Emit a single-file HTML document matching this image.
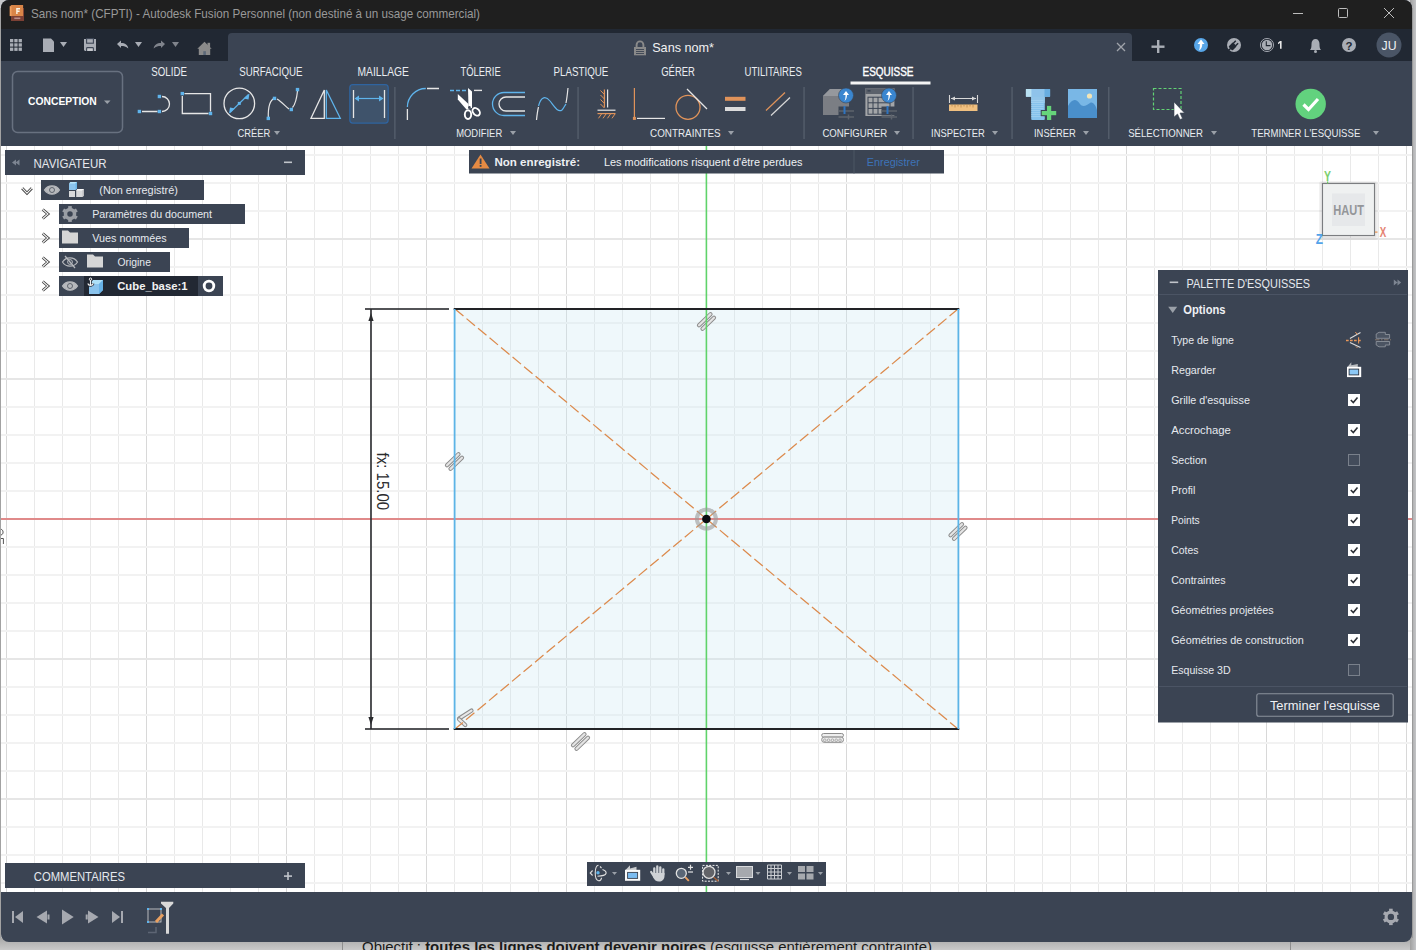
<!DOCTYPE html><html><head><meta charset="utf-8"><style>html,body{margin:0;padding:0;width:1416px;height:950px;overflow:hidden;background:#d2d3d5}svg{display:block;font-family:"Liberation Sans",sans-serif}</style></head><body><svg width="1416" height="950" viewBox="0 0 1416 950"><defs><linearGradient id="sh" x1="0" y1="0" x2="0" y2="1"><stop offset="0" stop-color="#a9a9a9"/><stop offset="1" stop-color="#c9c9c9"/></linearGradient><linearGradient id="shr" x1="0" y1="0" x2="1" y2="0"><stop offset="0" stop-color="#a0a0a0"/><stop offset="1" stop-color="#c4c5c7"/></linearGradient></defs><rect x="0" y="0" width="1416" height="950" fill="#c6c7c9"/><rect x="0" y="938" width="1416" height="12" fill="url(#sh)"/><rect x="1410" y="0" width="6" height="950" fill="url(#shr)"/><rect x="342" y="938" width="1" height="12" fill="#8e8e8e"/><rect x="1290" y="938" width="1" height="12" fill="#8e8e8e"/><text x="362" y="952" font-size="15" fill="#1a1a1a" textLength="570" lengthAdjust="spacingAndGlyphs">Objectif : <tspan font-weight="bold">toutes les lignes doivent devenir noires</tspan> (esquisse entièrement contrainte)</text><rect x="1412" y="8" width="1" height="930" fill="#9a9a9a"/><rect x="0" y="8" width="1" height="930" fill="#a2a2a2"/><rect x="1" y="0" width="1411" height="942" rx="8" fill="#3b4453"/><path d="M1 8 A8 8 0 0 1 9 0 H1404 A8 8 0 0 1 1412 8 V29 H1 Z" fill="#1f1f1f"/><rect x="1" y="29" width="1411" height="32" fill="#212833"/><path d="M228 61 V37 A4 4 0 0 1 232 33 H1128 A4 4 0 0 1 1132 37 V61 Z" fill="#3b4453"/><svg x="1" y="146" width="1411" height="746" viewBox="1 146 1411 746" overflow="hidden"><rect x="1" y="146" width="1411" height="746" fill="#ffffff"/><rect x="6" y="146" width="1" height="746" fill="#d8d8d8"/><rect x="34" y="146" width="1" height="746" fill="#e9e9e9"/><rect x="62" y="146" width="1" height="746" fill="#e9e9e9"/><rect x="90" y="146" width="1" height="746" fill="#e9e9e9"/><rect x="118" y="146" width="1" height="746" fill="#e9e9e9"/><rect x="146" y="146" width="1" height="746" fill="#d8d8d8"/><rect x="174" y="146" width="1" height="746" fill="#e9e9e9"/><rect x="202" y="146" width="1" height="746" fill="#e9e9e9"/><rect x="230" y="146" width="1" height="746" fill="#e9e9e9"/><rect x="258" y="146" width="1" height="746" fill="#e9e9e9"/><rect x="286" y="146" width="1" height="746" fill="#d8d8d8"/><rect x="314" y="146" width="1" height="746" fill="#e9e9e9"/><rect x="342" y="146" width="1" height="746" fill="#e9e9e9"/><rect x="370" y="146" width="1" height="746" fill="#e9e9e9"/><rect x="398" y="146" width="1" height="746" fill="#e9e9e9"/><rect x="426" y="146" width="1" height="746" fill="#d8d8d8"/><rect x="454" y="146" width="1" height="746" fill="#e9e9e9"/><rect x="482" y="146" width="1" height="746" fill="#e9e9e9"/><rect x="510" y="146" width="1" height="746" fill="#e9e9e9"/><rect x="538" y="146" width="1" height="746" fill="#e9e9e9"/><rect x="566" y="146" width="1" height="746" fill="#d8d8d8"/><rect x="594" y="146" width="1" height="746" fill="#e9e9e9"/><rect x="622" y="146" width="1" height="746" fill="#e9e9e9"/><rect x="650" y="146" width="1" height="746" fill="#e9e9e9"/><rect x="678" y="146" width="1" height="746" fill="#e9e9e9"/><rect x="706" y="146" width="1" height="746" fill="#d8d8d8"/><rect x="734" y="146" width="1" height="746" fill="#e9e9e9"/><rect x="762" y="146" width="1" height="746" fill="#e9e9e9"/><rect x="790" y="146" width="1" height="746" fill="#e9e9e9"/><rect x="818" y="146" width="1" height="746" fill="#e9e9e9"/><rect x="846" y="146" width="1" height="746" fill="#d8d8d8"/><rect x="874" y="146" width="1" height="746" fill="#e9e9e9"/><rect x="902" y="146" width="1" height="746" fill="#e9e9e9"/><rect x="930" y="146" width="1" height="746" fill="#e9e9e9"/><rect x="958" y="146" width="1" height="746" fill="#e9e9e9"/><rect x="986" y="146" width="1" height="746" fill="#d8d8d8"/><rect x="1014" y="146" width="1" height="746" fill="#e9e9e9"/><rect x="1042" y="146" width="1" height="746" fill="#e9e9e9"/><rect x="1070" y="146" width="1" height="746" fill="#e9e9e9"/><rect x="1098" y="146" width="1" height="746" fill="#e9e9e9"/><rect x="1126" y="146" width="1" height="746" fill="#d8d8d8"/><rect x="1154" y="146" width="1" height="746" fill="#e9e9e9"/><rect x="1182" y="146" width="1" height="746" fill="#e9e9e9"/><rect x="1210" y="146" width="1" height="746" fill="#e9e9e9"/><rect x="1238" y="146" width="1" height="746" fill="#e9e9e9"/><rect x="1266" y="146" width="1" height="746" fill="#d8d8d8"/><rect x="1294" y="146" width="1" height="746" fill="#e9e9e9"/><rect x="1322" y="146" width="1" height="746" fill="#e9e9e9"/><rect x="1350" y="146" width="1" height="746" fill="#e9e9e9"/><rect x="1378" y="146" width="1" height="746" fill="#e9e9e9"/><rect x="1406" y="146" width="1" height="746" fill="#d8d8d8"/><rect x="1" y="154" width="1411" height="2" fill="#f2f2f2"/><rect x="1" y="182" width="1411" height="2" fill="#f2f2f2"/><rect x="1" y="210" width="1411" height="2" fill="#f2f2f2"/><rect x="1" y="238" width="1411" height="2" fill="#e6e6e6"/><rect x="1" y="266" width="1411" height="2" fill="#f2f2f2"/><rect x="1" y="294" width="1411" height="2" fill="#f2f2f2"/><rect x="1" y="322" width="1411" height="2" fill="#f2f2f2"/><rect x="1" y="350" width="1411" height="2" fill="#f2f2f2"/><rect x="1" y="378" width="1411" height="2" fill="#e6e6e6"/><rect x="1" y="406" width="1411" height="2" fill="#f2f2f2"/><rect x="1" y="434" width="1411" height="2" fill="#f2f2f2"/><rect x="1" y="462" width="1411" height="2" fill="#f2f2f2"/><rect x="1" y="490" width="1411" height="2" fill="#f2f2f2"/><rect x="1" y="518" width="1411" height="2" fill="#e6e6e6"/><rect x="1" y="546" width="1411" height="2" fill="#f2f2f2"/><rect x="1" y="574" width="1411" height="2" fill="#f2f2f2"/><rect x="1" y="602" width="1411" height="2" fill="#f2f2f2"/><rect x="1" y="630" width="1411" height="2" fill="#f2f2f2"/><rect x="1" y="658" width="1411" height="2" fill="#e6e6e6"/><rect x="1" y="686" width="1411" height="2" fill="#f2f2f2"/><rect x="1" y="714" width="1411" height="2" fill="#f2f2f2"/><rect x="1" y="742" width="1411" height="2" fill="#f2f2f2"/><rect x="1" y="770" width="1411" height="2" fill="#f2f2f2"/><rect x="1" y="798" width="1411" height="2" fill="#e6e6e6"/><rect x="1" y="826" width="1411" height="2" fill="#f2f2f2"/><rect x="1" y="854" width="1411" height="2" fill="#f2f2f2"/><rect x="1" y="882" width="1411" height="2" fill="#f2f2f2"/><rect x="454.5" y="309" width="503.5" height="420" fill="#cbe9f3" opacity="0.3"/><g transform="translate(706.5,321.5)" fill="#e4e4e4" stroke="#8c8c8c" stroke-width="1"><rect x="-9.6" y="-4.1" width="19.2" height="3.2" rx="1.6" transform="rotate(-44)"/><rect x="-9.6" y="0.9" width="19.2" height="3.2" rx="1.6" transform="rotate(-44)"/></g><g transform="translate(454.5,461.5)" fill="#e4e4e4" stroke="#8c8c8c" stroke-width="1"><rect x="-9.6" y="-4.1" width="19.2" height="3.2" rx="1.6" transform="rotate(-44)"/><rect x="-9.6" y="0.9" width="19.2" height="3.2" rx="1.6" transform="rotate(-44)"/></g><g transform="translate(958.0,531.5)" fill="#e4e4e4" stroke="#8c8c8c" stroke-width="1"><rect x="-9.6" y="-4.1" width="19.2" height="3.2" rx="1.6" transform="rotate(-44)"/><rect x="-9.6" y="0.9" width="19.2" height="3.2" rx="1.6" transform="rotate(-44)"/></g><g transform="translate(580.5,741.5)" fill="#e4e4e4" stroke="#8c8c8c" stroke-width="1"><rect x="-9.6" y="-4.1" width="19.2" height="3.2" rx="1.6" transform="rotate(-44)"/><rect x="-9.6" y="0.9" width="19.2" height="3.2" rx="1.6" transform="rotate(-44)"/></g><g fill="#eeeeee" stroke="#8c8c8c" stroke-width="1"><rect x="821.7" y="733.5" width="21.8" height="3.6" rx="1.8"/><rect x="821.7" y="737.1" width="21.8" height="5.2" rx="2.4"/></g><g fill="none" stroke="#9a9a9a" stroke-width="0.8"><circle cx="824.8" cy="740.2" r="1.3"/><circle cx="828.6" cy="740.2" r="1.3"/><circle cx="832.4" cy="740.2" r="1.3"/><circle cx="836.2" cy="740.2" r="1.3"/><circle cx="840.0" cy="740.2" r="1.3"/></g><g fill="#e8e8e8" stroke="#8c8c8c" stroke-width="1"><rect x="-9" y="-1.6" width="18" height="3.2" rx="1.6" transform="translate(465.3,714.6) rotate(-33)"/><rect x="-5.8" y="-1.6" width="11.6" height="3.2" rx="1.6" transform="translate(462.2,722.2) rotate(43)"/></g><rect x="1" y="518" width="1411" height="2" fill="#e08a8a"/><rect x="705.6" y="146" width="1.6" height="746" fill="#5fd36a"/><g stroke="#dc8a4c" stroke-width="1.25" stroke-dasharray="11 4" fill="none"><line x1="455" y1="309" x2="958" y2="729"/><line x1="958" y1="309" x2="455" y2="729"/></g><rect x="453.7" y="308" width="505.6" height="2" fill="#222326"/><rect x="453.7" y="728" width="505.6" height="2" fill="#222326"/><rect x="453.7" y="309" width="1.8" height="420" fill="#5cb4e6"/><rect x="957.5" y="309" width="1.8" height="420" fill="#5cb4e6"/><circle cx="706.4" cy="519" r="9.5" fill="none" stroke="#9a9a9a" stroke-width="4" opacity="0.6"/><circle cx="706.4" cy="519" r="4.3" fill="#0b0d12"/><g fill="#2a2b2e"><rect x="365" y="308.2" width="84" height="1.6"/><rect x="365" y="728.2" width="84" height="1.6"/><rect x="370.2" y="309" width="1.6" height="420"/><path d="M371 313 L373.6 321 L368.4 321 Z"/><path d="M371 725 L373.6 717 L368.4 717 Z"/></g><text transform="translate(376.8,452.6) rotate(90)" font-size="15.8" fill="#2a2b2e" textLength="57.5" lengthAdjust="spacingAndGlyphs" y="0" x="0" dy="0">fx: 15.00</text><path d="M1 529.3 C3.5 529.5 4 534.5 1 535 M1 538.5 H3.4 V544" fill="none" stroke="#555" stroke-width="1"/></svg><rect x="11" y="8" width="13" height="13" fill="#7c4034"/><path d="M9.8 6.5 L11.3 5 H23.1 V16.1 H9.8 Z" fill="#d98548"/><rect x="9.8" y="6.5" width="1.7" height="9.6" fill="#eea060"/><path d="M16.2 8 H20 V9.4 H17.6 V10.6 H19.6 V11.9 H17.6 V14 H16.2 Z" fill="#fbf4e6"/><rect x="14.3" y="17.5" width="6" height="1.6" fill="#c9a0a0" opacity="0.8"/><text x="31.0" y="17.8" font-size="12.4" fill="#999999" font-weight="normal" textLength="449.0" lengthAdjust="spacingAndGlyphs" >Sans nom* (CFPTI) - Autodesk Fusion Personnel (non destiné à un usage commercial)</text><rect x="1293" y="13" width="10" height="1" fill="#bdbdbd"/><rect x="1338.5" y="8.5" width="9" height="9" rx="1" fill="none" stroke="#bdbdbd" stroke-width="1"/><path d="M1384 8 L1394 18 M1394 8 L1384 18" stroke="#bdbdbd" stroke-width="1"/><rect x="10.0" y="39.0" width="3.3" height="3.3" fill="#a9adb5"/><rect x="10.0" y="43.3" width="3.3" height="3.3" fill="#a9adb5"/><rect x="10.0" y="47.6" width="3.3" height="3.3" fill="#a9adb5"/><rect x="14.3" y="39.0" width="3.3" height="3.3" fill="#a9adb5"/><rect x="14.3" y="43.3" width="3.3" height="3.3" fill="#a9adb5"/><rect x="14.3" y="47.6" width="3.3" height="3.3" fill="#a9adb5"/><rect x="18.6" y="39.0" width="3.3" height="3.3" fill="#a9adb5"/><rect x="18.6" y="43.3" width="3.3" height="3.3" fill="#a9adb5"/><rect x="18.6" y="47.6" width="3.3" height="3.3" fill="#a9adb5"/><path d="M43 38.5 H51 L54 41.5 V52 H43 Z" fill="#a9adb5"/><path d="M60 42 H67 L63.5 47 Z" fill="#a9adb5"/><path d="M84 39 H96 V51 H85 L84 50 Z" fill="#a9adb5"/><rect x="86.6" y="38.6" width="6.8" height="4.6" fill="#a9adb5" stroke="#3d4655" stroke-width="1.1"/><path d="M86.6 51 V48.5 Q86.6 47.6 87.5 47.6 H92.5 Q93.4 47.6 93.4 48.5 V51" fill="#c4c7cc" stroke="#3d4655" stroke-width="1.1"/><path d="M117 44 L121 40.5 V43 C125 43 128 45 128.3 48.5 C126 46.5 124 46 121 46 V48 Z" fill="#a9adb5"/><path d="M135 42 H142 L138.5 47 Z" fill="#a9adb5"/><path d="M165 44 L161 40.5 V43 C157 43 154 45 153.7 48.5 C156 46.5 158 46 161 46 V48 Z" fill="#80848c"/><path d="M172 42 H179 L175.5 47 Z" fill="#80848c"/><rect x="207.5" y="42.8" width="2.6" height="4.5" fill="#8a8a8a"/><path d="M197.3 48.8 L204.5 41.8 L211.7 48.8 H210.2 V55 H198.8 V48.8 Z" fill="#8a8a8a"/><rect x="203.3" y="51.2" width="2.6" height="3.8" fill="#5b6878"/><path d="M636.6 47.5 V44.8 A3.4 3.4 0 0 1 643.4 44.8 V47.5" fill="none" stroke="#8a8a8a" stroke-width="1.9"/><rect x="634" y="47" width="12" height="8.3" fill="#8a8a8a"/><rect x="636" y="49" width="8" height="0.9" fill="#3b4453"/><rect x="636" y="51" width="8" height="0.9" fill="#3b4453"/><rect x="636" y="53" width="8" height="0.9" fill="#3b4453"/><text x="652.2" y="52.2" font-size="13.2" fill="#f2f2f2" font-weight="normal" textLength="61.8" lengthAdjust="spacingAndGlyphs" >Sans nom*</text><path d="M1117 43 L1125 51 M1125 43 L1117 51" stroke="#a0a4ab" stroke-width="1.3"/><rect x="1151.5" y="45.5" width="13" height="2.4" fill="#a9adb5"/><rect x="1157" y="40" width="2.4" height="13" fill="#a9adb5"/><circle cx="1201" cy="45" r="7" fill="#58a6e8"/><path d="M1201 39.5 L1204.5 44 H1202.3 C1202.3 47 1201 49.5 1199 50.5 C1199.8 48.5 1200 46 1199.8 44 H1197.5 Z" fill="#fff"/><circle cx="1234" cy="45" r="7" fill="#a9adb5"/><g transform="rotate(-45 1233 46)" fill="#212833"><rect x="1229.3" y="43.2" width="6.2" height="5.6" rx="1"/><rect x="1235" y="43.6" width="3.6" height="1.4"/><rect x="1235" y="47" width="3.6" height="1.4"/><rect x="1225.8" y="45.3" width="4" height="1.4"/></g><circle cx="1267" cy="45" r="6.6" fill="none" stroke="#a9adb5" stroke-width="0.9"/><circle cx="1267" cy="45" r="5.2" fill="#a9adb5"/><path d="M1266.3 41.2 V45.6 H1270.5" fill="none" stroke="#212833" stroke-width="1.1"/><path d="M1280 41 H1281.6 V48.8 H1280 V43 L1278 44.3 V42.7 Z" fill="#e8e8e8"/><path d="M1310 50 C1311.5 48.5 1311.5 46 1311.5 44 C1311.5 41 1313 39 1315.5 39 C1318 39 1319.5 41 1319.5 44 C1319.5 46 1319.5 48.5 1321 50 Z" fill="#a9adb5"/><circle cx="1315.5" cy="51.5" r="1.5" fill="#a9adb5"/><circle cx="1349" cy="45" r="7" fill="#a9adb5"/><text x="1345.5" y="49.5" font-size="11.0" fill="#212833" font-weight="bold" textLength="7.0" lengthAdjust="spacingAndGlyphs" >?</text><circle cx="1389" cy="45" r="12.5" fill="#4a5566"/><text x="1381.5" y="50.0" font-size="13.0" fill="#eef0f3" font-weight="normal" textLength="15.0" lengthAdjust="spacingAndGlyphs" >JU</text><text x="151.3" y="76.2" font-size="12.0" fill="#e9ecf0" font-weight="normal" textLength="35.6" lengthAdjust="spacingAndGlyphs" >SOLIDE</text><text x="239.3" y="76.2" font-size="12.0" fill="#e9ecf0" font-weight="normal" textLength="63.2" lengthAdjust="spacingAndGlyphs" >SURFACIQUE</text><text x="357.5" y="76.2" font-size="12.0" fill="#e9ecf0" font-weight="normal" textLength="51.4" lengthAdjust="spacingAndGlyphs" >MAILLAGE</text><text x="460.5" y="76.2" font-size="12.0" fill="#e9ecf0" font-weight="normal" textLength="40.2" lengthAdjust="spacingAndGlyphs" >TÔLERIE</text><text x="553.5" y="76.2" font-size="12.0" fill="#e9ecf0" font-weight="normal" textLength="54.9" lengthAdjust="spacingAndGlyphs" >PLASTIQUE</text><text x="661.2" y="76.2" font-size="12.0" fill="#e9ecf0" font-weight="normal" textLength="33.7" lengthAdjust="spacingAndGlyphs" >GÉRER</text><text x="744.5" y="76.2" font-size="12.0" fill="#e9ecf0" font-weight="normal" textLength="57.3" lengthAdjust="spacingAndGlyphs" >UTILITAIRES</text><text x="862.5" y="76.2" font-size="12.0" fill="#ffffff" font-weight="normal" textLength="51.0" lengthAdjust="spacingAndGlyphs" stroke="#ffffff" stroke-width="0.4">ESQUISSE</text><rect x="850.5" y="81.5" width="80" height="3" fill="#f4f4f4"/><rect x="12.5" y="71.5" width="110" height="61" rx="5" fill="none" stroke="#687180" stroke-width="1.5"/><text x="28.0" y="105.0" font-size="11.6" fill="#ffffff" font-weight="bold" textLength="68.8" lengthAdjust="spacingAndGlyphs" >CONCEPTION</text><path d="M104 100.5 H110.5 L107.25 104 Z" fill="#9aa0a8"/><rect x="394.1" y="87" width="1.5" height="52" fill="#535c6a"/><rect x="577.3" y="87" width="1.5" height="52" fill="#535c6a"/><rect x="803.3" y="87" width="1.5" height="52" fill="#535c6a"/><rect x="912.3" y="87" width="1.5" height="52" fill="#535c6a"/><rect x="1011.3" y="87" width="1.5" height="52" fill="#535c6a"/><rect x="1108.0" y="87" width="1.5" height="52" fill="#535c6a"/><text x="237.4" y="137.4" font-size="11.6" fill="#e9ecf0" font-weight="normal" textLength="32.8" lengthAdjust="spacingAndGlyphs" >CRÉER</text><path d="M274.0 131 H280.0 L277.0 135 Z" fill="#9aa0a8"/><text x="456.2" y="137.4" font-size="11.6" fill="#e9ecf0" font-weight="normal" textLength="46.0" lengthAdjust="spacingAndGlyphs" >MODIFIER</text><path d="M510.0 131 H516.0 L513.0 135 Z" fill="#9aa0a8"/><text x="650.1" y="137.4" font-size="11.6" fill="#e9ecf0" font-weight="normal" textLength="70.6" lengthAdjust="spacingAndGlyphs" >CONTRAINTES</text><path d="M728.0 131 H734.0 L731.0 135 Z" fill="#9aa0a8"/><text x="822.4" y="137.4" font-size="11.6" fill="#e9ecf0" font-weight="normal" textLength="64.7" lengthAdjust="spacingAndGlyphs" >CONFIGURER</text><path d="M894.0 131 H900.0 L897.0 135 Z" fill="#9aa0a8"/><text x="931.1" y="137.4" font-size="11.6" fill="#e9ecf0" font-weight="normal" textLength="53.7" lengthAdjust="spacingAndGlyphs" >INSPECTER</text><path d="M992.0 131 H998.0 L995.0 135 Z" fill="#9aa0a8"/><text x="1034.0" y="137.4" font-size="11.6" fill="#e9ecf0" font-weight="normal" textLength="41.8" lengthAdjust="spacingAndGlyphs" >INSÉRER</text><path d="M1083.0 131 H1089.0 L1086.0 135 Z" fill="#9aa0a8"/><text x="1128.2" y="137.4" font-size="11.6" fill="#e9ecf0" font-weight="normal" textLength="74.8" lengthAdjust="spacingAndGlyphs" >SÉLECTIONNER</text><path d="M1211.0 131 H1217.0 L1214.0 135 Z" fill="#9aa0a8"/><text x="1251.3" y="137.4" font-size="11.6" fill="#e9ecf0" font-weight="normal" textLength="109.0" lengthAdjust="spacingAndGlyphs" >TERMINER L&#x27;ESQUISSE</text><path d="M1373.0 131 H1379.0 L1376.0 135 Z" fill="#9aa0a8"/><path d="M142 111.5 H157.5 M162 96.5 A7.5 7.5 0 0 1 162 111.5" fill="none" stroke="#e6e6e6" stroke-width="1.3"/><rect x="137.7" y="109.8" width="3.4" height="3.4" fill="#5fb4ec"/><rect x="157.7" y="109.8" width="3.4" height="3.4" fill="#5fb4ec"/><rect x="157.7" y="94.8" width="3.4" height="3.4" fill="#5fb4ec"/><path d="M184.5 93.6 H210.5 V111.5 M182.3 96 V113.5 H208.5" fill="none" stroke="#e6e6e6" stroke-width="1.3"/><rect x="180.6" y="91.9" width="3.4" height="3.4" fill="#5fb4ec"/><rect x="208.8" y="111.8" width="3.4" height="3.4" fill="#5fb4ec"/><circle cx="239.3" cy="103.4" r="15.3" fill="none" stroke="#e6e6e6" stroke-width="1.3"/><path d="M230 112.5 L248.5 94.5" stroke="#5fb4ec" stroke-width="1.1"/><path d="M249.5 93.5 L248.5 99.5 L243.5 98.5 Z M229 113.5 L230 107.5 L235 108.5 Z" fill="#5fb4ec"/><rect x="237.8" y="101.9" width="3.0" height="3.0" fill="#5fb4ec"/><path d="M268.3 118 C268 108 270 100 274.5 98.4 M277 99 C282 102 286 107 289 109 M292.5 107.5 C295.5 104 297 96 297.5 91" fill="none" stroke="#e6e6e6" stroke-width="1.2"/><rect x="266.6" y="116.7" width="3.4" height="3.4" fill="#5fb4ec"/><rect x="272.8" y="96.7" width="3.4" height="3.4" fill="#5fb4ec"/><rect x="289.6" y="107.8" width="3.4" height="3.4" fill="#5fb4ec"/><rect x="295.8" y="87.9" width="3.4" height="3.4" fill="#5fb4ec"/><path d="M311 118.3 L324.3 90 V118.3 Z" fill="none" stroke="#e6e6e6" stroke-width="1.3"/><path d="M326.3 90 L340.3 118.3 H326.3 Z" fill="none" stroke="#5fb4ec" stroke-width="1.3"/><rect x="349.8" y="84.7" width="38.4" height="38.4" rx="3" fill="#3f536b" stroke="#2f64a0" stroke-width="1.2"/><path d="M353.5 90 V118 M384.5 90 V118" stroke="#e6e6e6" stroke-width="1.3"/><path d="M356 98.5 H382" stroke="#5fb4ec" stroke-width="1.2"/><path d="M354.5 98.5 L359 95.5 V101.5 Z M383.5 98.5 L379 95.5 V101.5 Z" fill="#5fb4ec"/><path d="M407.4 107 A18.5 18.5 0 0 1 425.8 88.5" fill="none" stroke="#5fb4ec" stroke-width="1.3"/><path d="M407.4 109 V120 M427 88.5 H439" stroke="#e6e6e6" stroke-width="1.3"/><path d="M450 90.4 H454 M456 90.4 H460 M462 90.4 H466" stroke="#5fb4ec" stroke-width="1.5"/><path d="M474 90.4 H482" stroke="#e6e6e6" stroke-width="1.4"/><path d="M468 88 L472 91.5 V108 L468.5 108.5 Z" fill="#fff"/><path d="M457.8 93.9 L468.5 104 V109 L466.5 109.5 L457.8 99.6 Z" fill="#fff"/><circle cx="469.4" cy="107.4" r="1.3" fill="#3b4453"/><ellipse cx="468" cy="114.6" rx="3.2" ry="4.4" fill="none" stroke="#fff" stroke-width="1.9"/><ellipse cx="476.2" cy="111.8" rx="3.1" ry="4.3" fill="none" stroke="#fff" stroke-width="1.9" transform="rotate(-42 476.2 111.8)"/><path d="M525 92.5 H504 A11.5 11.5 0 0 0 504 115.5 H525" fill="none" stroke="#5fb4ec" stroke-width="1.3"/><path d="M525 97 H506 A7 7 0 0 0 506 111 H525" fill="none" stroke="#e6e6e6" stroke-width="1.3"/><path d="M536.5 120 C537 115 537.5 111 538.5 107" fill="none" stroke="#e6e6e6" stroke-width="1.2"/><path d="M538.5 106 C541 96 546 96 550 101 C554 106 558 113 562 110 C564 108 565 105 566 104" fill="none" stroke="#5fb4ec" stroke-width="1.2"/><path d="M566 103 C567 98 567.5 93 568 88" fill="none" stroke="#e6e6e6" stroke-width="1.2"/><path d="M597.5 110.2 H615.5" stroke="#e6e6e6" stroke-width="1.2"/><path d="M597.5 113.6 H615.5" stroke="#e0935a" stroke-width="1.2"/><path d="M607.6 89.5 V107.5" stroke="#e6e6e6" stroke-width="1.2"/><path d="M604.4 89.5 V107.5" stroke="#e0935a" stroke-width="1.2"/><path d="M600.5 90.5 L604.4 94.5 M600.5 95 L604.4 99 M600.5 99.5 L604.4 103.5 M600.5 104 L604.4 108 M598.5 118.3 L601.5 114 M603 118.3 L606 114 M607.5 118.3 L610.5 114 M612 118.3 L615 114" stroke="#e0935a" stroke-width="1"/><path d="M634.4 88 V117" stroke="#e0935a" stroke-width="1.2"/><path d="M637 118.4 H665" stroke="#e6e6e6" stroke-width="1.2"/><rect x="632.9" y="116.9" width="3.0" height="3.0" fill="#e0935a"/><circle cx="688" cy="107.3" r="12" fill="none" stroke="#e0935a" stroke-width="1.3"/><path d="M687 89 L707 109" stroke="#e6e6e6" stroke-width="1.2"/><rect x="725" y="96.8" width="20.5" height="4" fill="#e0935a"/><rect x="725" y="107" width="20.5" height="4" fill="#dcdcdc"/><path d="M766 110.5 L785 92.5" stroke="#e0935a" stroke-width="1.2"/><path d="M771 115.5 L790 97.5" stroke="#d8d8d8" stroke-width="1.2"/><path d="M823.0 96 L830.0 89 H849.0 V115 H823.0 Z" fill="#7b7e84"/><path d="M823.0 96 L830.0 89 H849.0 L842.0 96 Z" fill="#95989d"/><path d="M838.5 106.5 H854.0 V115.5 H838.5 Z" fill="#3b4453"/><path d="M838.5 110.9 H854.0 M838.5 117 H854.0 M848.5 114.5 V119.5" stroke="#5d636c" stroke-width="1.5"/><rect x="843.5" y="106" width="2" height="8" fill="#2f74c0"/><circle cx="846.0" cy="95.5" r="7.5" fill="#3a86d0" stroke="#3b4453" stroke-width="0.6"/><path d="M846.0 91 L849.0 95 H847.0 C847.0 98 846.0 100 844.5 101 C845.5 99 845.5 97 845.5 95 H843.0 Z" fill="#fff"/><rect x="865.4" y="88.2" width="29" height="27.8" fill="#a3a5a8"/><rect x="865.4" y="88.2" width="29" height="5.8" fill="#5b616b"/><rect x="867.5" y="90" width="3" height="1.6" fill="#3b4453"/><rect x="868.0" y="97.2" width="22" height="17" fill="none" stroke="#3b4453" stroke-width="1"/><path d="M873.0 97 V114 M878.0 97 V114 M868.0 102.8 H890.0 M868.0 108.4 H890.0" stroke="#3b4453" stroke-width="1"/><path d="M881.5 106.5 H897.0 V115.5 H881.5 Z" fill="#3b4453"/><path d="M881.5 110.9 H897.0 M881.5 117 H897.0 M891.5 114.5 V119.5" stroke="#5d636c" stroke-width="1.5"/><rect x="886.5" y="106" width="2" height="8" fill="#2f74c0"/><circle cx="889.0" cy="95.5" r="7.5" fill="#3a86d0" stroke="#3b4453" stroke-width="0.6"/><path d="M889.0 91 L892.0 95 H890.0 C890.0 98 889.0 100 887.5 101 C888.5 99 888.5 97 888.5 95 H886.0 Z" fill="#fff"/><path d="M949.5 95 V103 M977.5 95 V103 M951 98.5 H976" stroke="#d8d8d8" stroke-width="1.1"/><path d="M951 98.5 L955 96.5 V100.5 Z M976 98.5 L972 96.5 V100.5 Z" fill="#d8d8d8"/><rect x="949" y="104.5" width="28.5" height="6.5" fill="#f0c080"/><path d="M952 104.5 V106.5 M955 104.5 V107.5 M958 104.5 V106.5 M961 104.5 V107.5 M964 104.5 V106.5 M967 104.5 V107.5 M970 104.5 V106.5 M973 104.5 V107.5" stroke="#b8864a" stroke-width="0.8"/><path d="M1031.2 96 H1044.8 V119 Q1044.8 120 1043.8 120 H1032.2 Q1031.2 120 1031.2 119 Z" fill="#86c2ec"/><rect x="1031.2" y="96.5" width="13.6" height="6.5" fill="#93c6ea"/><path d="M1031.2 100.5 H1043.5 M1031.2 102.5 H1043.5 M1031.2 104.5 H1043.5 M1031.2 106.5 H1043.5 M1031.2 108.5 H1043.5 M1031.2 110.5 H1043.5 M1031.2 112.5 H1043.5 M1031.2 114.5 H1043.5 M1031.2 116.5 H1043.5 " stroke="#a9d6f4" stroke-width="0.6"/><rect x="1025.9" y="89" width="24.2" height="7.8" rx="0.8" fill="#8fc3ea"/><rect x="1025.9" y="89" width="5.5" height="7.8" fill="#b9e1f2"/><rect x="1044.5" y="89" width="5.6" height="7.8" fill="#68ade0"/><path d="M1040.7 110 H1046 V104.9 H1052.2 V110 H1057.2 V116.2 H1052.2 V121 H1046 V116.2 H1040.7 Z" fill="#3b4453"/><rect x="1041.7" y="111" width="14.5" height="4.2" fill="#66d47a"/><rect x="1047" y="105.9" width="4.2" height="14.1" fill="#66d47a"/><rect x="1068" y="89" width="29" height="29" fill="#79b7e6"/><path d="M1068 118 V106 C1072 99 1076 98 1080 104 C1083 108 1087 105 1090 103 C1093 101 1096 106 1097 110 V118 Z" fill="#4a8fcb"/><circle cx="1089.5" cy="96" r="2.6" fill="#f2e4b6"/><rect x="1153.5" y="88.5" width="27.5" height="21" fill="none" stroke="#62d374" stroke-width="1.2" stroke-dasharray="3 2"/><path d="M1174 102 V117 L1177.5 114 L1180 119.5 L1182.5 118.5 L1180 113 L1184.5 113 Z" fill="#fff" stroke="#3b4453" stroke-width="0.6"/><circle cx="1310.7" cy="104" r="15.2" fill="#62d27e"/><path d="M1303.5 104.5 L1308.5 109.5 L1318 99" fill="none" stroke="#fff" stroke-width="3.2"/><rect x="5" y="150" width="300" height="25" fill="#3b4453"/><path d="M16 159.5 L12 162.5 L16 165.5 Z M19.5 159.5 L15.5 162.5 L19.5 165.5 Z" fill="#7d8592"/><text x="33.5" y="168.1" font-size="13.0" fill="#e6e9ee" font-weight="normal" textLength="73.1" lengthAdjust="spacingAndGlyphs" >NAVIGATEUR</text><rect x="284" y="161.5" width="8" height="1.6" fill="#c0c4ca"/><path d="M22.2 188.2 L27 193.2 L31.8 188.2" fill="none" stroke="#3a3a3a" stroke-width="2.8" stroke-linejoin="miter"/><path d="M22.2 188.2 L27 193.2 L31.8 188.2" fill="none" stroke="#f4f4f4" stroke-width="1.1"/><rect x="41" y="180" width="163" height="20" fill="#3b4453"/><path d="M44.5 190.0 C48.0 184.5 56.0 184.5 59.5 190.0 C56.0 195.5 48.0 195.5 44.5 190.0 Z" fill="#b7b9bd" stroke="#b7b9bd" stroke-width="1.2"/><circle cx="52.0" cy="190.0" r="2.5" fill="#b7b9bd" stroke="#545a64" stroke-width="0.9"/><path d="M69 183.5 L70.5 182 H77 V188.5 L75.5 190 H69 Z" fill="#8cc4ec"/><path d="M69 183.5 L70.5 182 H77 L75.5 183.5 Z" fill="#b8e4f8"/><path d="M75.5 183.5 L77 182 V188.5 L75.5 190 Z" fill="#6bb5e8"/><rect x="69" y="191" width="6" height="6" fill="#d9dadc"/><path d="M76.2 190.5 L77.5 189 H84 V195.5 L82.5 197 H76.2 Z" fill="#d9dadc"/><path d="M76.2 190.5 L77.5 189 H84 L82.5 190.5 Z" fill="#fafafa"/><path d="M82.5 190.5 L84 189 V195.5 L82.5 197 Z" fill="#bdbec1"/><text x="99.3" y="194.0" font-size="11.8" fill="#e6e9ee" font-weight="normal" textLength="78.5" lengthAdjust="spacingAndGlyphs" >(Non enregistré)</text><path d="M42.7 209.5 L48.0 214.0 L42.7 218.5" fill="none" stroke="#3a3a3a" stroke-width="2.8" stroke-linejoin="miter"/><path d="M42.7 209.5 L48.0 214.0 L42.7 218.5" fill="none" stroke="#f4f4f4" stroke-width="1.1"/><rect x="59" y="204" width="186" height="20" fill="#3b4453"/><g transform="translate(70,214)"><circle r="4.5" fill="none" stroke="#9a9ea5" stroke-width="3.5"/><rect x="-1.8" y="-7.9" width="3.6" height="3.5" fill="#9a9ea5" transform="rotate(0)"/><rect x="-1.8" y="-7.9" width="3.6" height="3.5" fill="#9a9ea5" transform="rotate(60)"/><rect x="-1.8" y="-7.9" width="3.6" height="3.5" fill="#9a9ea5" transform="rotate(120)"/><rect x="-1.8" y="-7.9" width="3.6" height="3.5" fill="#9a9ea5" transform="rotate(180)"/><rect x="-1.8" y="-7.9" width="3.6" height="3.5" fill="#9a9ea5" transform="rotate(240)"/><rect x="-1.8" y="-7.9" width="3.6" height="3.5" fill="#9a9ea5" transform="rotate(300)"/></g><text x="92.2" y="218.0" font-size="11.8" fill="#e6e9ee" font-weight="normal" textLength="119.8" lengthAdjust="spacingAndGlyphs" >Paramètres du document</text><path d="M42.7 233.5 L48.0 238.0 L42.7 242.5" fill="none" stroke="#3a3a3a" stroke-width="2.8" stroke-linejoin="miter"/><path d="M42.7 233.5 L48.0 238.0 L42.7 242.5" fill="none" stroke="#f4f4f4" stroke-width="1.1"/><rect x="59" y="228" width="130" height="20" fill="#3b4453"/><path d="M62.0 230.5 H68.0 L70.0 232.5 H78.0 V243.5 H62.0 Z" fill="#d6d6d6"/><text x="92.3" y="242.0" font-size="11.8" fill="#e6e9ee" font-weight="normal" textLength="74.4" lengthAdjust="spacingAndGlyphs" >Vues nommées</text><path d="M42.7 257.5 L48.0 262.0 L42.7 266.5" fill="none" stroke="#3a3a3a" stroke-width="2.8" stroke-linejoin="miter"/><path d="M42.7 257.5 L48.0 262.0 L42.7 266.5" fill="none" stroke="#f4f4f4" stroke-width="1.1"/><rect x="59" y="252" width="111" height="20" fill="#3b4453"/><path d="M62.5 262.0 C66.0 256.5 74.0 256.5 77.5 262.0 C74.0 267.5 66.0 267.5 62.5 262.0 Z" fill="none" stroke="#b7b9bd" stroke-width="1.2"/><circle cx="70.0" cy="262.0" r="2.4" fill="none" stroke="#b7b9bd" stroke-width="1"/><path d="M65.0 256.0 L75.0 268.0" stroke="#b7b9bd" stroke-width="1.2"/><path d="M87.0 254.5 H93.0 L95.0 256.5 H103.0 V267.5 H87.0 Z" fill="#d6d6d6"/><text x="117.5" y="266.0" font-size="11.8" fill="#e6e9ee" font-weight="normal" textLength="33.4" lengthAdjust="spacingAndGlyphs" >Origine</text><path d="M42.7 281.5 L48.0 286.0 L42.7 290.5" fill="none" stroke="#3a3a3a" stroke-width="2.8" stroke-linejoin="miter"/><path d="M42.7 281.5 L48.0 286.0 L42.7 290.5" fill="none" stroke="#f4f4f4" stroke-width="1.1"/><rect x="59" y="276" width="164" height="20" fill="#3b4453"/><rect x="84" y="276" width="114" height="20" fill="#222833"/><path d="M62.5 286.0 C66.0 280.5 74.0 280.5 77.5 286.0 C74.0 291.5 66.0 291.5 62.5 286.0 Z" fill="#b7b9bd" stroke="#b7b9bd" stroke-width="1.2"/><circle cx="70.0" cy="286.0" r="2.5" fill="#b7b9bd" stroke="#545a64" stroke-width="0.9"/><path d="M89 284 L93 280 H103 V290 L99 294 H89 Z" fill="#8ac3ec"/><path d="M89 284 L93 280 H103 L99 284 Z" fill="#aee0f7"/><path d="M99 284 L103 280 V290 L99 294 Z" fill="#68b2e6"/><path d="M90.5 280 V286 M87.8 283.5 C88.5 286 92.5 286 93.2 283.5" fill="none" stroke="#222833" stroke-width="2.6"/><circle cx="90.5" cy="279.2" r="1.3" fill="none" stroke="#222833" stroke-width="2.2"/><path d="M90.5 280 V286 M87.8 283.5 C88.5 286 92.5 286 93.2 283.5" fill="none" stroke="#f2f2f2" stroke-width="1.1"/><circle cx="90.5" cy="279.2" r="1.2" fill="none" stroke="#f2f2f2" stroke-width="1"/><text x="117.2" y="290.0" font-size="11.8" fill="#f2f2f2" font-weight="bold" textLength="70.3" lengthAdjust="spacingAndGlyphs" >Cube_base:1</text><circle cx="209" cy="286" r="4.8" fill="none" stroke="#fff" stroke-width="2.8"/><rect x="469" y="150" width="475" height="23.5" fill="#3b4453"/><path d="M480.5 154.5 L489.5 168.5 H471.5 Z" fill="#e58a43"/><rect x="479.7" y="158.5" width="1.8" height="5.5" fill="#3b4453"/><rect x="479.7" y="165" width="1.8" height="1.8" fill="#3b4453"/><text x="494.4" y="165.7" font-size="11.8" fill="#eef0f3" font-weight="bold" textLength="85.6" lengthAdjust="spacingAndGlyphs" >Non enregistré:</text><text x="604.0" y="165.7" font-size="11.8" fill="#eef0f3" font-weight="normal" textLength="198.4" lengthAdjust="spacingAndGlyphs" >Les modifications risquent d&#x27;être perdues</text><rect x="853.5" y="150" width="1" height="23.5" fill="#4d5665"/><text x="866.8" y="165.7" font-size="11.8" fill="#3d73b8" font-weight="normal" textLength="53.0" lengthAdjust="spacingAndGlyphs" >Enregistrer</text><rect x="1319" y="181" width="59" height="59" rx="3" fill="#000" opacity="0.05"/><rect x="1320.5" y="182" width="56" height="56" rx="2" fill="#000" opacity="0.05"/><rect x="1322.5" y="183.5" width="52" height="52" fill="#eff1f1" stroke="#7b7d80" stroke-width="1.1"/><rect x="1332" y="193.5" width="33" height="32.5" fill="#e6e8ea"/><text x="1333.3" y="214.6" font-size="14.8" fill="#949699" font-weight="bold" textLength="30.7" lengthAdjust="spacingAndGlyphs" >HAUT</text><text x="1324.0" y="180.6" font-size="14.5" fill="#7ccf6e" font-weight="bold" textLength="7.0" lengthAdjust="spacingAndGlyphs" >Y</text><rect x="1327" y="181.5" width="1.2" height="2" fill="#6ccf62"/><text x="1379.8" y="236.6" font-size="14.5" fill="#e58474" font-weight="bold" textLength="6.5" lengthAdjust="spacingAndGlyphs" >X</text><rect x="1375" y="231.5" width="2.5" height="1.2" fill="#e9934f"/><text x="1315.8" y="243.7" font-size="14.5" fill="#52a3ea" font-weight="bold" textLength="7.2" lengthAdjust="spacingAndGlyphs" >Z</text><rect x="1158" y="270" width="250" height="452.5" fill="#3b4453"/><rect x="1159" y="294" width="248" height="1" fill="#4b5464"/><rect x="1169.7" y="281.5" width="8.5" height="1.6" fill="#c0c4ca"/><text x="1186.6" y="287.9" font-size="13.0" fill="#e6e9ee" font-weight="normal" textLength="123.4" lengthAdjust="spacingAndGlyphs" >PALETTE D&#x27;ESQUISSES</text><path d="M1393.8 279.5 L1397.5 282.5 L1393.8 285.5 Z M1397.5 279.5 L1401.2 282.5 L1397.5 285.5 Z" fill="#7d8592"/><path d="M1168.2 306.7 H1177.2 L1172.7 312.9 Z" fill="#9aa0a8"/><text x="1183.3" y="314.2" font-size="12.0" fill="#eef0f3" font-weight="bold" textLength="42.2" lengthAdjust="spacingAndGlyphs" >Options</text><text x="1171.2" y="343.9" font-size="11.8" fill="#e6e9ee" font-weight="normal" textLength="62.8" lengthAdjust="spacingAndGlyphs" >Type de ligne</text><text x="1171.2" y="373.9" font-size="11.8" fill="#e6e9ee" font-weight="normal" textLength="44.7" lengthAdjust="spacingAndGlyphs" >Regarder</text><text x="1171.2" y="403.9" font-size="11.8" fill="#e6e9ee" font-weight="normal" textLength="78.7" lengthAdjust="spacingAndGlyphs" >Grille d&#x27;esquisse</text><rect x="1348" y="394.0" width="12" height="12" fill="#ffffff"/><path d="M1350.8 400.0 L1353.3 402.5 L1357.5 397.5" fill="none" stroke="#2b2f36" stroke-width="1.6"/><text x="1171.2" y="433.9" font-size="11.8" fill="#e6e9ee" font-weight="normal" textLength="59.7" lengthAdjust="spacingAndGlyphs" >Accrochage</text><rect x="1348" y="424.0" width="12" height="12" fill="#ffffff"/><path d="M1350.8 430.0 L1353.3 432.5 L1357.5 427.5" fill="none" stroke="#2b2f36" stroke-width="1.6"/><text x="1171.2" y="463.9" font-size="11.8" fill="#e6e9ee" font-weight="normal" textLength="35.6" lengthAdjust="spacingAndGlyphs" >Section</text><rect x="1348.5" y="454.5" width="11" height="11" fill="#434c5b" stroke="#79808b" stroke-width="1"/><text x="1171.2" y="493.9" font-size="11.8" fill="#e6e9ee" font-weight="normal" textLength="24.1" lengthAdjust="spacingAndGlyphs" >Profil</text><rect x="1348" y="484.0" width="12" height="12" fill="#ffffff"/><path d="M1350.8 490.0 L1353.3 492.5 L1357.5 487.5" fill="none" stroke="#2b2f36" stroke-width="1.6"/><text x="1171.2" y="523.9" font-size="11.8" fill="#e6e9ee" font-weight="normal" textLength="28.4" lengthAdjust="spacingAndGlyphs" >Points</text><rect x="1348" y="514.0" width="12" height="12" fill="#ffffff"/><path d="M1350.8 520.0 L1353.3 522.5 L1357.5 517.5" fill="none" stroke="#2b2f36" stroke-width="1.6"/><text x="1171.2" y="553.9" font-size="11.8" fill="#e6e9ee" font-weight="normal" textLength="27.2" lengthAdjust="spacingAndGlyphs" >Cotes</text><rect x="1348" y="544.0" width="12" height="12" fill="#ffffff"/><path d="M1350.8 550.0 L1353.3 552.5 L1357.5 547.5" fill="none" stroke="#2b2f36" stroke-width="1.6"/><text x="1171.2" y="583.9" font-size="11.8" fill="#e6e9ee" font-weight="normal" textLength="54.3" lengthAdjust="spacingAndGlyphs" >Contraintes</text><rect x="1348" y="574.0" width="12" height="12" fill="#ffffff"/><path d="M1350.8 580.0 L1353.3 582.5 L1357.5 577.5" fill="none" stroke="#2b2f36" stroke-width="1.6"/><text x="1171.2" y="613.9" font-size="11.8" fill="#e6e9ee" font-weight="normal" textLength="102.3" lengthAdjust="spacingAndGlyphs" >Géométries projetées</text><rect x="1348" y="604.0" width="12" height="12" fill="#ffffff"/><path d="M1350.8 610.0 L1353.3 612.5 L1357.5 607.5" fill="none" stroke="#2b2f36" stroke-width="1.6"/><text x="1171.2" y="643.9" font-size="11.8" fill="#e6e9ee" font-weight="normal" textLength="132.6" lengthAdjust="spacingAndGlyphs" >Géométries de construction</text><rect x="1348" y="634.0" width="12" height="12" fill="#ffffff"/><path d="M1350.8 640.0 L1353.3 642.5 L1357.5 637.5" fill="none" stroke="#2b2f36" stroke-width="1.6"/><text x="1171.2" y="673.9" font-size="11.8" fill="#e6e9ee" font-weight="normal" textLength="59.4" lengthAdjust="spacingAndGlyphs" >Esquisse 3D</text><rect x="1348.5" y="664.5" width="11" height="11" fill="#434c5b" stroke="#79808b" stroke-width="1"/><path d="M1346 340.5 H1362" stroke="#e8965a" stroke-width="1.3" stroke-dasharray="2.7 1.3"/><path d="M1358.6 337.3 V343.5" stroke="#e8965a" stroke-width="1.1"/><path d="M1349.9 338.4 L1360.5 332.4 M1349.9 342.4 L1360.5 347.6" stroke="#dcdcdc" stroke-width="1.1"/><path d="M1355.3 332 L1357.5 334.5 M1356 346.5 L1357.3 347.8" stroke="#e8965a" stroke-width="1"/><path d="M1376.2 334 L1379 332.3 H1385.3 V334.5 H1389.6 V338.3 H1376.2 Z M1376.2 341.5 H1389.6 V345 H1385.3 V346.8 H1379 L1376.2 345 Z" fill="#4b5462" stroke="#8c929b" stroke-width="0.9"/><path d="M1375 339.8 H1391" stroke="#8f7e70" stroke-width="0.9" stroke-dasharray="4.5 1.5 1.5 1.5"/><path d="M1347.5 367 L1351.3 362.3 V365.3 L1357.8 364 V367 Z" fill="#b9bcc0"/><rect x="1347" y="366.8" width="14.2" height="10.3" fill="#ffffff"/><rect x="1349.1" y="369.1" width="9.6" height="5.8" fill="#8cc8f5" stroke="#2b3340" stroke-width="0.9"/><rect x="1159" y="686" width="248" height="1" fill="#4b5464"/><rect x="1256.8" y="693.8" width="136.4" height="22.4" rx="2" fill="none" stroke="#8a919c" stroke-width="1.1"/><text x="1269.9" y="710.2" font-size="12.6" fill="#eef0f3" font-weight="normal" textLength="110.1" lengthAdjust="spacingAndGlyphs" >Terminer l&#x27;esquisse</text><rect x="5" y="863" width="300" height="25" fill="#3b4453"/><text x="33.8" y="881.2" font-size="13.0" fill="#e6e9ee" font-weight="normal" textLength="91.2" lengthAdjust="spacingAndGlyphs" >COMMENTAIRES</text><rect x="284" y="875.3" width="8" height="1.6" fill="#c0c4ca"/><rect x="287.2" y="872" width="1.6" height="8" fill="#c0c4ca"/><rect x="587" y="862" width="239" height="24" fill="#3b4453"/><path d="M592.6 870.5 L590.2 873 L592.6 875.5" fill="none" stroke="#e0e0e0" stroke-width="1.1"/><path d="M598.5 865.2 C594.5 865.5 593.8 879.5 598.5 880.8 C600.5 881 601.5 879 601.5 877.8" fill="none" stroke="#e0e0e0" stroke-width="1.1"/><path d="M600 866.5 L601.5 868 M602.5 869.5 C605 870.5 606.5 872 606 873.5 C605.5 875 602 876 597.5 876.2" fill="none" stroke="#e0e0e0" stroke-width="1.1"/><circle cx="598" cy="872.8" r="1.7" fill="#5fb4ec"/><path d="M612 872 H617 L614.5 875 Z" fill="#9aa0a8"/><path d="M625.5 870 L630 865.2 V868.5 L636.5 866.8 V870 Z" fill="#c9cbce"/><rect x="625" y="869.8" width="15.2" height="11" fill="#fafafa"/><rect x="627.6" y="872.4" width="10" height="6" fill="#7cbcf0" stroke="#3a4250" stroke-width="0.9"/><g stroke="#cfd2d6" stroke-width="2.3" stroke-linecap="round" fill="none"><path d="M654.3 874 V868.5 M657.3 873.5 V866.5 M660.3 873.5 V867.3 M663.3 874.5 V869.5 M651.2 872 L654 876.5"/></g><path d="M653.2 873 H664.5 V876 C664.5 879.5 662 881.5 659 881.5 C656 881.5 654.5 880 653 877 Z" fill="#cfd2d6"/><path d="M685.2 877.2 L688.8 880.8" stroke="#eda060" stroke-width="1.9"/><circle cx="681.3" cy="873.3" r="5" fill="#5a6676" stroke="#e2e2e2" stroke-width="1.3"/><path d="M688 867.3 H693 M690.5 864.8 V869.8" stroke="#e2e2e2" stroke-width="1.2"/><path d="M688 872 H693" stroke="#b9bcc0" stroke-width="1.6"/><rect x="702.6" y="865.4" width="15.6" height="15.8" fill="none" stroke="#f0f0f0" stroke-width="1" stroke-dasharray="2 1.3"/><path d="M713.5 877 L718.3 881.3" stroke="#a85f32" stroke-width="1.3"/><circle cx="709" cy="872.3" r="6" fill="#626368" stroke="#dedede" stroke-width="1.3"/><path d="M726 872 H731 L728.5 875 Z" fill="#9aa0a8"/><rect x="736.5" y="866.5" width="16" height="11" fill="#a6a9ae" stroke="#d8dadd" stroke-width="1"/><path d="M740 879.5 H749" stroke="#d8dadd" stroke-width="1.2"/><path d="M755.5 872 H760.5 L758 875 Z" fill="#9aa0a8"/><path d="M767.5 865 H781.5 V879 H767.5 Z M771 865 V879 M774.5 865 V879 M778 865 V879 M767.5 868.5 H781.5 M767.5 872 H781.5 M767.5 875.5 H781.5" fill="none" stroke="#c9ccd1" stroke-width="1"/><path d="M787 872 H792 L789.5 875 Z" fill="#9aa0a8"/><rect x="798" y="866" width="7" height="6" fill="#a6a9ae"/><rect x="806.5" y="866" width="7" height="6" fill="#a6a9ae"/><rect x="798" y="873.5" width="7" height="6" fill="#a6a9ae"/><rect x="806.5" y="873.5" width="7" height="6" fill="#a6a9ae"/><path d="M818 872 H823 L820.5 875 Z" fill="#9aa0a8"/><rect x="12" y="911" width="2" height="12" fill="#a6a9b0"/><path d="M23 911 V923 L15 917 Z" fill="#a6a9b0"/><path d="M47 910.5 V923.5 L36.5 917 Z" fill="#a6a9b0"/><rect x="47.5" y="914.5" width="2" height="5" fill="#a6a9b0"/><path d="M62 909.5 V924.5 L73.7 917 Z" fill="#a6a9b0"/><path d="M88 910.5 V923.5 L98.5 917 Z" fill="#a6a9b0"/><rect x="85.7" y="914.5" width="2" height="5" fill="#a6a9b0"/><path d="M112 911 V923 L120 917 Z" fill="#a6a9b0"/><rect x="121" y="911" width="2" height="12" fill="#a6a9b0"/><rect x="148" y="909" width="13" height="13" fill="none" stroke="#d8d8d8" stroke-width="0.8"/><rect x="147.0" y="908.0" width="2.0" height="2.0" fill="#5fb4ec"/><rect x="160.0" y="908.0" width="2.0" height="2.0" fill="#5fb4ec"/><rect x="147.0" y="921.0" width="2.0" height="2.0" fill="#5fb4ec"/><path d="M156 922 L163 914.5" stroke="#e9a060" stroke-width="3"/><path d="M148 932.5 H156 V927" fill="none" stroke="#5d6574" stroke-width="1.5"/><path d="M161 901.8 H173.3 V903.5 L169 908 V933.8 H166 V908 L161 903.5 Z" fill="#d8d8d8"/><g transform="translate(1390.9,916.9)"><circle r="4.8" fill="none" stroke="#a6a9b0" stroke-width="3.2"/><rect x="-1.8" y="-8.2" width="3.6" height="4" fill="#a6a9b0" transform="rotate(0)"/><rect x="-1.8" y="-8.2" width="3.6" height="4" fill="#a6a9b0" transform="rotate(60)"/><rect x="-1.8" y="-8.2" width="3.6" height="4" fill="#a6a9b0" transform="rotate(120)"/><rect x="-1.8" y="-8.2" width="3.6" height="4" fill="#a6a9b0" transform="rotate(180)"/><rect x="-1.8" y="-8.2" width="3.6" height="4" fill="#a6a9b0" transform="rotate(240)"/><rect x="-1.8" y="-8.2" width="3.6" height="4" fill="#a6a9b0" transform="rotate(300)"/></g></svg></body></html>
